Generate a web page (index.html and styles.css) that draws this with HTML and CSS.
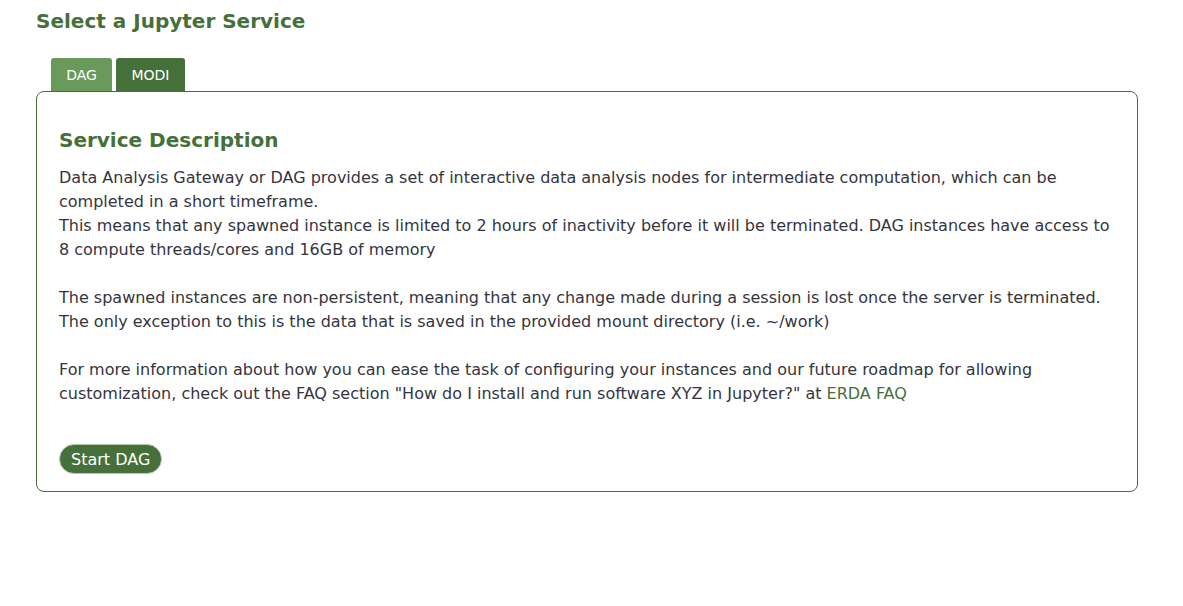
FILE: index.html
```html
<!DOCTYPE html>
<html>
<head>
<meta charset="utf-8">
<link rel="stylesheet" href="styles.css">
</head>
<body>
<div class="page">
  <h2 class="title">Select a Jupyter Service</h2>
  <div class="tabs">
    <div class="tab tab-active">DAG</div>
    <div class="tab">MODI</div>
  </div>
  <div class="panel">
    <h3 class="subtitle">Service Description</h3>
    <p class="text">Data Analysis Gateway or DAG provides a set of interactive data analysis nodes for intermediate computation, which can be completed in a short timeframe.<br>This means that any spawned instance is limited to 2 hours of inactivity before it will be terminated. DAG instances have access to 8 compute threads/cores and 16GB of memory</p>
    <p class="text">The spawned instances are non-persistent, meaning that any change made during a session is lost once the server is terminated. The only exception to this is the data that is saved in the provided mount directory (i.e. ~/work)</p>
    <p class="text">For more information about how you can ease the task of configuring your instances and our future roadmap for allowing customization, check out the FAQ section "How do I install and run software XYZ in Jupyter?" at <a class="link" href="#">ERDA FAQ</a></p>
    <button class="start">Start DAG</button>
  </div>
</div>
</body>
</html>
```
FILE: styles.css
```css
html, body {
  margin: 0;
  padding: 0;
  background: #fff;
}
body {
  font-family: "DejaVu Sans", Verdana, sans-serif;
  color: #353540;
}
.page {
  padding: 8px 45px 0 36px;
}
.title {
  margin: 0;
  font-size: 20px;
  line-height: 26px;
  font-weight: bold;
  color: #46703a;
}
.tabs {
  display: flex;
  gap: 4px;
  margin-top: 24px;
  padding-left: 15px;
}
.tab {
  width: 61px;
  height: 33px;
  box-sizing: border-box;
  border: 1px solid #46703a;
  border-bottom: none;
  border-radius: 3px 3px 0 0;
  background: #46703a;
  color: #fff;
  font-size: 14px;
  display: flex;
  align-items: center;
  justify-content: center;
}
.tab + .tab { width: 69px; }
.tab-active {
  background: #6a9a5b;
  border-color: #6a9a5b;
}
.panel {
  border: 1px solid #46703a;
  border-radius: 8px;
  padding: 34px 22px 16px 22px;
  height: 401px;
  box-sizing: border-box;
}
.subtitle {
  margin: 0 0 12px 0;
  font-size: 20px;
  line-height: 28px;
  color: #46703a;
}
.text {
  margin: 0 0 24px 0;
  font-size: 16px;
  line-height: 24px;
}
.link {
  color: #46703a;
  text-decoration: none;
}
.start {
  margin-top: 14px;
  font-family: "DejaVu Sans", Verdana, sans-serif;
  font-size: 16px;
  color: #fff;
  background: #46703a;
  border: 1px solid #b9c9b4;
  border-radius: 15px;
  height: 30px;
  padding: 0 11px;
}
```
